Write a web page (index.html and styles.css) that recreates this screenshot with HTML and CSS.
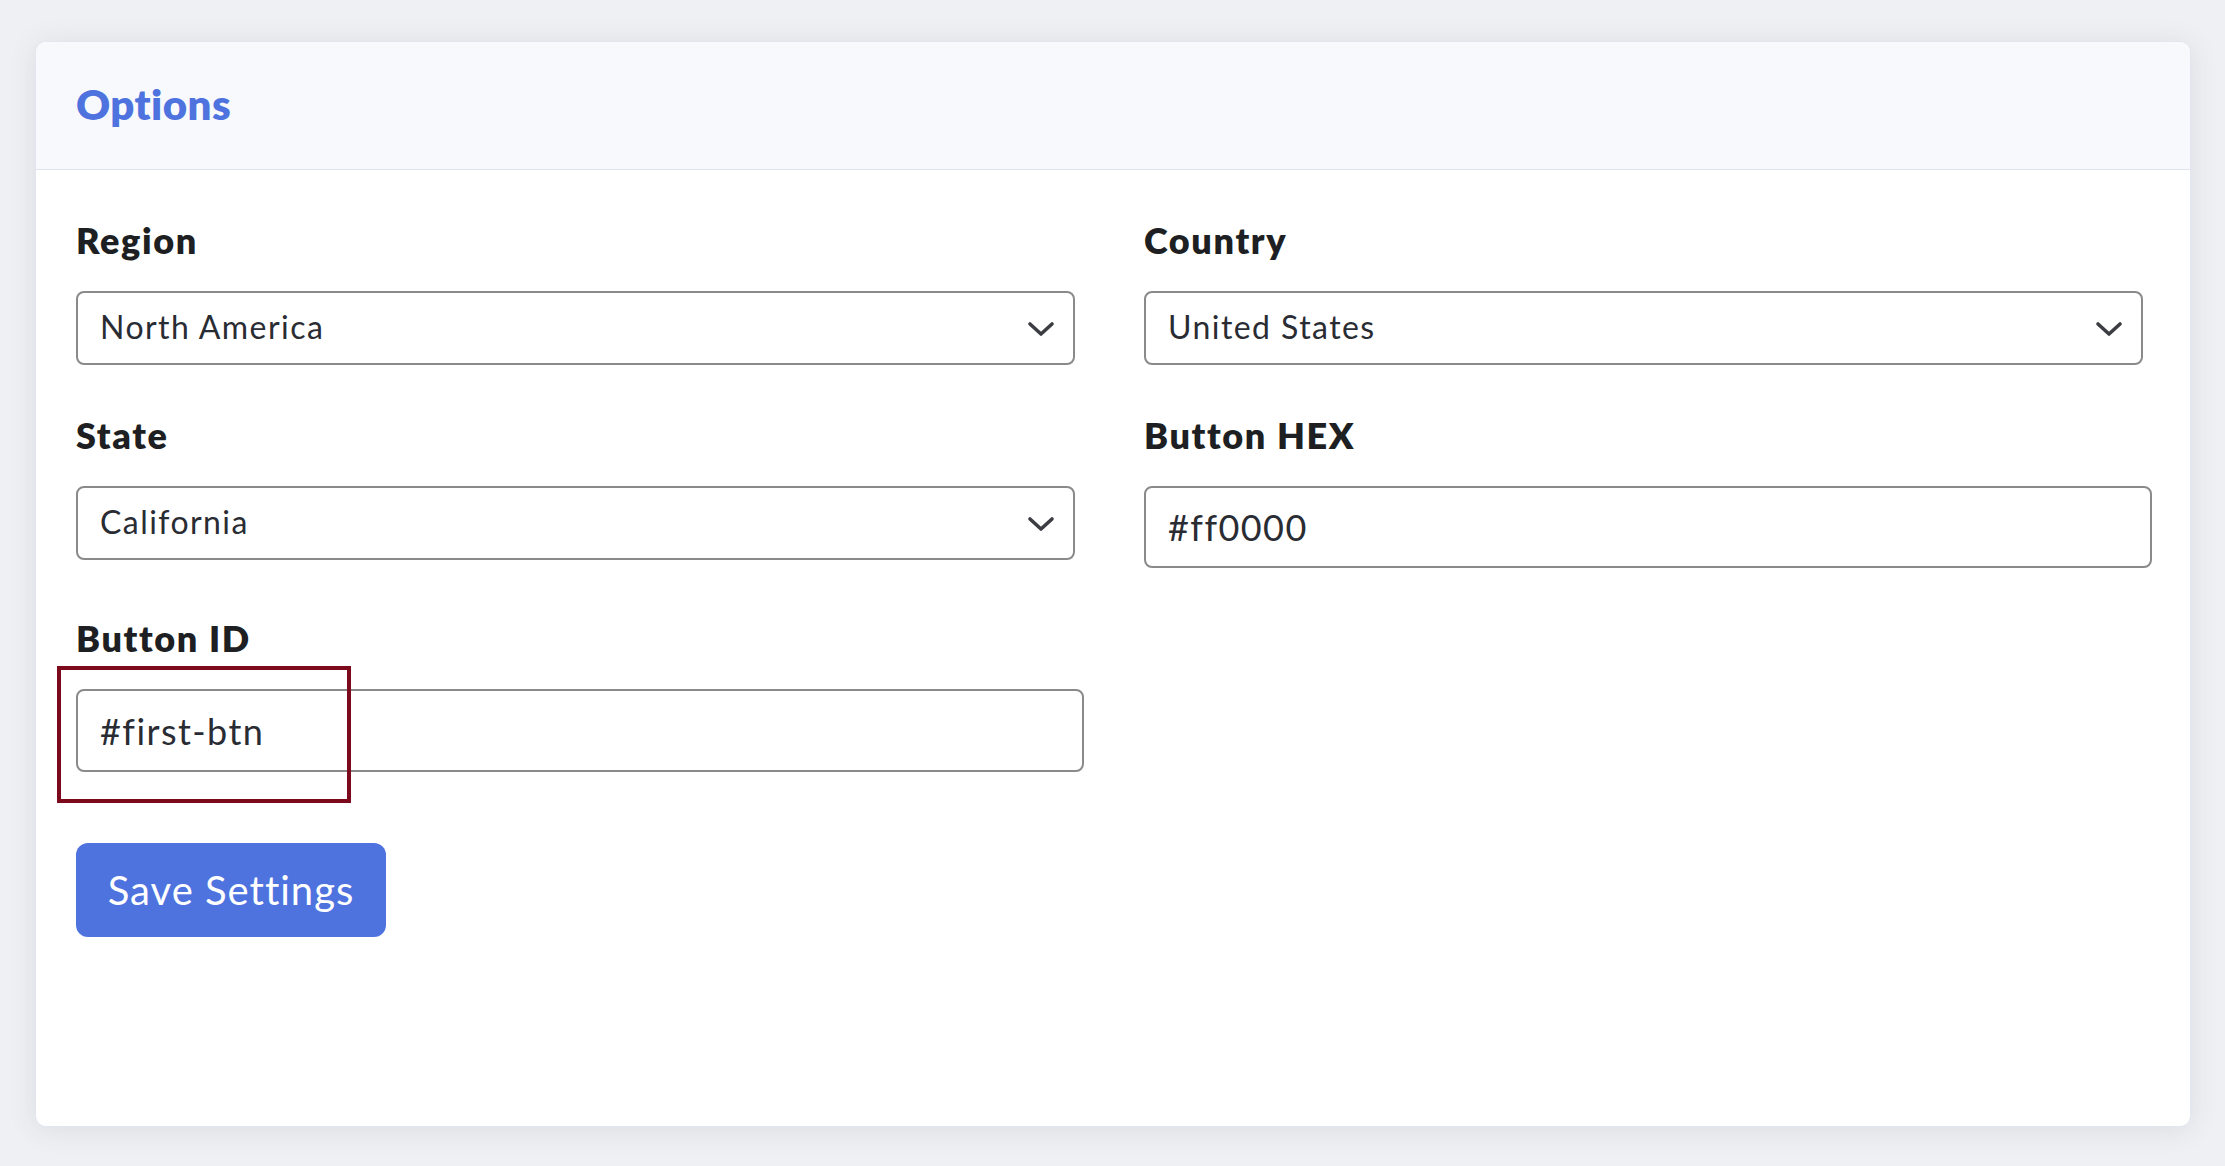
FILE: index.html
```html
<!DOCTYPE html>
<html lang="en">
<head>
<meta charset="utf-8">
<title>Options</title>
<link rel="stylesheet" href="styles.css">
</head>
<body>
<div class="page">
  <div class="card">
    <div class="card-header">
      <h2 class="card-title">Options</h2>
    </div>
    <div class="card-body">
      <div class="form-grid">
        <div class="form-group">
          <div class="label">Region</div>
          <div class="select">
            <span>North America</span>
            <svg class="chev" width="28" height="16" viewBox="0 0 28 16"><polyline points="3,3 14,13 25,3" fill="none" stroke="#3b3d42" stroke-width="3.6" stroke-linecap="round" stroke-linejoin="round"/></svg>
          </div>
        </div>
        <div class="form-group">
          <div class="label">Country</div>
          <div class="select">
            <span>United States</span>
            <svg class="chev" width="28" height="16" viewBox="0 0 28 16"><polyline points="3,3 14,13 25,3" fill="none" stroke="#3b3d42" stroke-width="3.6" stroke-linecap="round" stroke-linejoin="round"/></svg>
          </div>
        </div>
        <div class="form-group">
          <div class="label">State</div>
          <div class="select">
            <span>California</span>
            <svg class="chev" width="28" height="16" viewBox="0 0 28 16"><polyline points="3,3 14,13 25,3" fill="none" stroke="#3b3d42" stroke-width="3.6" stroke-linecap="round" stroke-linejoin="round"/></svg>
          </div>
        </div>
        <div class="form-group">
          <div class="label">Button HEX</div>
          <div class="input">#ff0000</div>
        </div>
        <div class="form-group">
          <div class="label">Button ID</div>
          <div class="input-wrap">
            <div class="input">#first-btn</div>
            <div class="highlight"></div>
          </div>
        </div>
      </div>
      <button class="btn">Save Settings</button>
    </div>
  </div>
</div>
</body>
</html>
```
FILE: styles.css
```css
html, body {
  margin: 0;
  padding: 0;
}
body {
  background: #eff0f4;
  font-family: Lato, "Noto Sans", sans-serif;
  color: #212226;
}
.page {
  padding: 41px 34px 39px 35px;
  height: 1166px;
  box-sizing: border-box;
}
.card {
  height: 100%;
  box-sizing: border-box;
  background: #fff;
  border: 1px solid #e3e6f0;
  border-radius: 11px;
  box-shadow: 0 3px 28px rgba(58, 59, 69, 0.10);
  overflow: hidden;
}
.card-header {
  height: 127px;
  background: #f8f9fc;
  border-bottom: 1px solid #e1e4ee;
  display: flex;
  align-items: center;
  padding: 0 40px;
}
.card-title {
  margin: 0;
  font-size: 42px;
  font-weight: 800;
  color: #4e73df;
  padding-bottom: 4px;
  letter-spacing: 0.01em;
}
.card-body {
  padding: 48px 40px;
}
.form-grid {
  display: grid;
  grid-template-columns: 1008px 1008px;
  column-gap: 60px;
}
.form-group {
  margin-bottom: 48px;
}
.label {
  font-size: 36px;
  line-height: 44px;
  font-weight: 800;
  color: #1e1f22;
  margin-bottom: 29px;
  letter-spacing: 0.045em;
}
.select {
  width: 999px;
  height: 74px;
  box-sizing: border-box;
  border: 2px solid #8a8a8c;
  border-radius: 8px;
  padding: 0 18px 0 22px;
  display: flex;
  align-items: center;
  justify-content: space-between;
  font-size: 32px;
  color: #2a2c33;
  letter-spacing: 0.045em;
}
.select span {
  padding-bottom: 3px;
}
.chev {
  display: block;
  margin-top: 2px;
}
.input {
  height: 82px;
  box-sizing: border-box;
  border: 2px solid #8a8a8c;
  border-radius: 8px;
  padding: 0 22px;
  display: flex;
  align-items: center;
  font-size: 36px;
  color: #2a2c33;
  letter-spacing: 0.04em;
}
.input-wrap {
  position: relative;
}
.input-wrap .input {
  height: 83px;
}
.highlight {
  position: absolute;
  left: -19px;
  top: -23px;
  width: 294px;
  height: 137px;
  box-sizing: border-box;
  border: 4px solid #7d0a1c;
}
.btn {
  margin-top: 23px;
  width: 310px;
  height: 94px;
  border: none;
  border-radius: 12px;
  background: #4e73df;
  color: #fff;
  font-family: Lato, "Noto Sans", sans-serif;
  font-size: 40px;
  font-weight: 400;
  letter-spacing: 0.025em;
  padding: 0;
}
```
